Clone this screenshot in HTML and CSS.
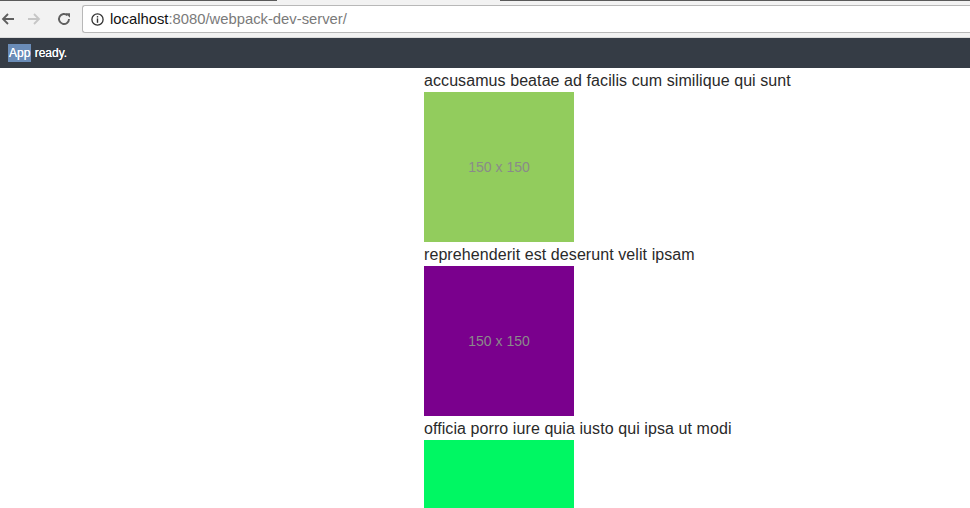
FILE: index.html
```html
<!DOCTYPE html>
<html>
<head>
<meta charset="utf-8">
<link rel="stylesheet" href="styles.css">
</head>
<body>
<div class="chrome">
  <div class="tabline"><span class="tl-a"></span><span class="tl-b"></span><span class="tl-c"></span></div>
  <div class="toolbar">
    <div class="navs">
      <svg class="nav back" width="16" height="16" viewBox="0 0 16 16"><path d="M14 8H3M8 3L3 8l5 5" fill="none" stroke="#5f5f5f" stroke-width="1.8"/></svg>
      <svg class="nav fwd" width="16" height="16" viewBox="0 0 16 16"><path d="M2 8h11M8 3l5 5-5 5" fill="none" stroke="#c6c6c6" stroke-width="1.8"/></svg>
      <svg class="nav reload" width="16" height="16" viewBox="0 0 16 16"><path d="M13 8a5 5 0 1 1-1.5-3.6" fill="none" stroke="#5f5f5f" stroke-width="1.9"/><path d="M9.5 2.2H14V6.7z" fill="#5f5f5f"/></svg>
    </div>
    <div class="omnibox">
      <svg class="info" width="13" height="13" viewBox="0 0 13 13"><circle cx="6.5" cy="6.5" r="5.6" fill="none" stroke="#333" stroke-width="1.3"/><rect x="5.8" y="5.4" width="1.4" height="4.4" fill="#333"/><rect x="5.8" y="3.1" width="1.4" height="1.4" fill="#333"/></svg>
      <span class="host">localhost</span><span class="path">:8080/webpack-dev-server/</span>
    </div>
  </div>
  <div class="underbar"></div>
</div>
<div class="status"><span class="sel">App</span> ready.</div>
<main class="list">
  <div class="item">
    <div class="title">accusamus beatae ad facilis cum similique qui sunt</div>
    <div class="thumb green">150 x 150</div>
  </div>
  <div class="item">
    <div class="title">reprehenderit est deserunt velit ipsam</div>
    <div class="thumb purple">150 x 150</div>
  </div>
  <div class="item">
    <div class="title">officia porro iure quia iusto qui ipsa ut modi</div>
    <div class="thumb lime"></div>
  </div>
</main>
</body>
</html>
```
FILE: styles.css
```css
html, body { margin: 0; padding: 0; background: #fff; overflow: hidden; }
body { font-family: "Liberation Sans", Arial, sans-serif; width: 970px; height: 508px; }
.chrome { background: #f2f2f2; height: 38px; display: flex; flex-direction: column; }
.tabline { display: flex; height: 1px; }
.tl-a { width: 277px; background: #5a5a5a; }
.tl-b { width: 223px; background: #f2f2f2; }
.tl-c { flex: 1; background: #5a5a5a; }
.toolbar { display: flex; align-items: center; margin-top: 4px; height: 28px; }
.navs { display: flex; align-items: center; width: 82px; }
.nav { display: block; }
.back { margin-left: 0; }
.fwd { margin-left: 10px; }
.reload { margin-left: 14px; }
.omnibox { flex: 1; height: 26px; background: #fff; border: 1px solid #b8b8b8; border-right: none; border-radius: 3px 0 0 3px; display: flex; align-items: center; font-size: 14.8px; }
.info { margin-left: 8px; margin-right: 6px; }
.host { color: #111; }
.path { color: #7a7a7a; }
.underbar { flex: 1; border-bottom: 1px solid #dcdcdc; }
.status { background: #353c45; height: 30px; color: #fff; font-size: 12px; line-height: 30px; padding-left: 8px; font-weight: 500; text-shadow: 0 0 0.4px #fff; }
.sel { background: #6a8cb7; padding: 2px 1px; }
.list { margin-left: 424px; }
.item { display: flex; flex-direction: column; }
.title { font-size: 16px; line-height: 22px; height: 22px; padding-top: 2px; color: #2a2a2a; letter-spacing: 0.08px; }
.thumb { width: 150px; height: 150px; display: flex; align-items: center; justify-content: center; font-size: 14px; color: #8a8a8a; }
.green { background: #92cc5d; }
.purple { background: #7a008d; }
.lime { background: #00f763; }
```
